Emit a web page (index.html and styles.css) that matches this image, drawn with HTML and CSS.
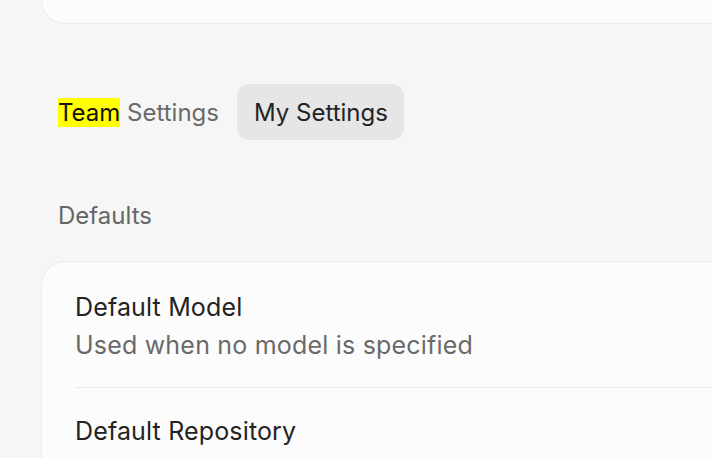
FILE: index.html
```html
<!DOCTYPE html>
<html lang="en">
<head>
    <meta charset="UTF-8">
    <meta name="viewport" content="width=device-width, initial-scale=1.0">
    <title>Settings</title>
    <link rel="stylesheet" href="styles.css">
</head>
<body>
    <div class="page">
        <div class="top-card"></div>

        <div class="tabs">
            <button class="tab"><mark>Team</mark> Settings</button>
            <button class="tab active">My Settings</button>
        </div>

        <div class="section-label">Defaults</div>

        <div class="card">
            <div class="row">
                <div class="row-title">Default Model</div>
                <div class="row-desc">Used when no model is specified</div>
            </div>
            <div class="row">
                <div class="row-title">Default Repository</div>
                <div class="row-desc">Used when no repository is specified</div>
            </div>
        </div>
    </div>
</body>
</html>
```

FILE: styles.css
```css
body {
    margin: 0;
    background: #f6f6f6;
    font-family: 'Inter', 'Noto Sans', sans-serif;
    color: #232323;
    overflow: hidden;
}
.page {
    width: 1000px;
    padding-left: 41px;
}
.top-card {
    height: 23px;
    background: #fcfcfc;
    border: 1px solid #ebebeb;
    border-top: none;
    border-radius: 0 0 0 24px;
}
.tabs {
    display: flex;
    gap: 1px;
    margin-top: 60px;
}
.tab {
    height: 56px;
    padding: 0 17px;
    border: none;
    border-radius: 12px;
    background: transparent;
    font-family: inherit;
    font-size: 24px;
    color: #6a6a6a;
    cursor: pointer;
}
.tab mark {
    background: #ffff00;
    color: #111;
}
.tab.active {
    padding: 0 16px 0 17px;
    background: #e6e6e6;
    color: #232323;
}
.section-label {
    margin-top: 58px;
    font-size: 24px;
    line-height: 36px;
    color: #666;
    padding-left: 17px;
}
.card {
    margin-top: 27px;
    padding-top: 2px;
    background: #fcfcfc;
    border: 1px solid #ebebeb;
    border-radius: 24px;
}
.row {
    margin-left: 33px;
    padding: 25px 0 24px;
    border-bottom: 1px solid #ebebeb;
}
.row-title {
    font-size: 25px;
    line-height: 36px;
    letter-spacing: 0.15px;
    color: #232323;
}
.row-desc {
    margin-top: 2px;
    font-size: 25px;
    line-height: 36px;
    letter-spacing: 0.2px;
    color: #6a6a6a;
}
```
